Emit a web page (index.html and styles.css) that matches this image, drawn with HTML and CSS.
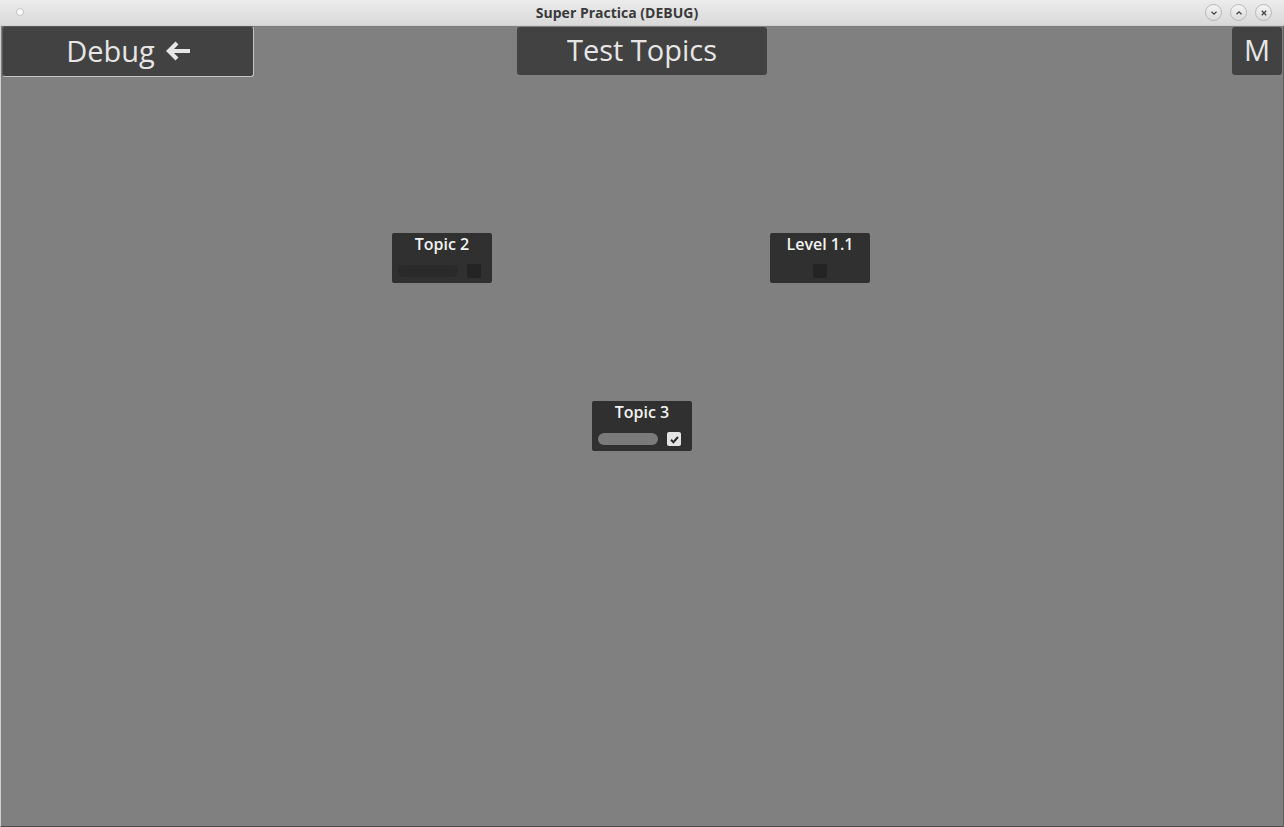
FILE: index.html
```html
<!DOCTYPE html>
<html>
<head>
<meta charset="utf-8">
<link rel="stylesheet" href="styles.css">
</head>
<body>
<div class="window">
  <div class="titlebar">
    <span class="dot"></span>
    <span class="title">Super Practica (DEBUG)</span>
    <div class="controls">
      <span class="ctl"><svg width="10" height="10" viewBox="0 0 10 10"><path d="M2.5 3.8 L5 6.2 L7.5 3.8" fill="none" stroke="#444" stroke-width="1.3"/></svg></span>
      <span class="ctl"><svg width="10" height="10" viewBox="0 0 10 10"><path d="M2.5 6.2 L5 3.8 L7.5 6.2" fill="none" stroke="#444" stroke-width="1.3"/></svg></span>
      <span class="ctl"><svg width="10" height="10" viewBox="0 0 10 10"><path d="M2.8 2.8 L7.2 7.2 M7.2 2.8 L2.8 7.2" fill="none" stroke="#444" stroke-width="1.3"/></svg></span>
    </div>
  </div>
  <div class="content">
    <div class="topbar">
      <div class="btn debug">Debug <svg class="arrow" width="28" height="22" viewBox="0 0 28 22"><path d="M13 3 L5 11 L13 19 M5 11 H26" fill="none" stroke="#e6e6e6" stroke-width="4.2" stroke-linejoin="miter"/></svg></div>
      <div class="btn heading">Test Topics</div>
      <div class="btn menu">M</div>
    </div>
    <div class="card c-topic2">
      <div class="card-title">Topic 2</div>
      <div class="card-row">
        <span class="bar"></span>
        <span class="check"></span>
      </div>
    </div>
    <div class="card c-level">
      <div class="card-title">Level 1.1</div>
      <div class="card-row center">
        <span class="check"></span>
      </div>
    </div>
    <div class="card c-topic3">
      <div class="card-title">Topic 3</div>
      <div class="card-row">
        <span class="bar light"></span>
        <span class="check on"><svg width="11" height="11" viewBox="0 0 11 11"><path d="M2 5.8 L4.4 8.2 L9 3" fill="none" stroke="#2a2a2a" stroke-width="2"/></svg></span>
      </div>
    </div>
  </div>
</div>
</body>
</html>
```
FILE: styles.css
```css
html, body {
  margin: 0;
  padding: 0;
  background: #808080;
}
.window {
  width: 1284px;
  height: 827px;
  display: flex;
  flex-direction: column;
  overflow: hidden;
  font-family: "Open Sans", "Noto Sans", sans-serif;
}
.titlebar {
  height: 26px;
  flex: none;
  background: linear-gradient(#ececec, #d9d9d9);
  display: flex;
  align-items: center;
  justify-content: center;
  position: relative;
  border-bottom: 1px solid #cfcfcf;
  box-sizing: border-box;
  padding-right: 50px;
}
.dot {
  position: absolute;
  left: 16px;
  top: 8px;
  width: 6px;
  height: 6px;
  border-radius: 50%;
  background: #fafafa;
  border: 1px solid #c4c4c4;
}
.title {
  font-family: "Open Sans", "Noto Sans", sans-serif;
  font-weight: 700;
  font-size: 14px;
  color: #3a3a3a;
  margin-top: -1px;
}
.controls {
  position: absolute;
  right: 12px;
  top: 4px;
  display: flex;
  gap: 8px;
}
.ctl {
  width: 17px;
  height: 17px;
  border-radius: 50%;
  box-sizing: border-box;
  border: 1px solid #b8b8b8;
  background: linear-gradient(#f4f4f4, #dcdcdc);
  display: flex;
  align-items: center;
  justify-content: center;
}
.content {
  flex: 1;
  position: relative;
  background: #808080;
  border-left: 1px solid #d0d0d0;
  border-right: 1px solid #606060;
  border-bottom: 1px solid #4a4a4a;
}
.topbar {
  display: grid;
  grid-template-columns: 1fr auto 1fr;
  align-items: start;
  padding: 0 1px 0 1px;
}
.btn {
  background: #424242;
  color: #e6e6e6;
  font-size: 29px;
  font-weight: 500;
  height: 48px;
  margin-top: 1px;
  border-radius: 3px;
  display: flex;
  align-items: center;
  justify-content: center;
  box-sizing: border-box;
  padding-bottom: 3px;
}
.debug {
  width: 252px;
  height: 51px;
  margin-top: 0;
  border: 1px solid #c6c6c6;
  border-top-color: #5a5a5a;
  border-left-color: #5a5a5a;
  gap: 9px;
  justify-self: start;
  padding-left: 2px;
}
.arrow {
  margin-top: 1px;
}
.heading {
  width: 250px;
}
.menu {
  width: 50px;
  justify-self: end;
}
.card {
  position: absolute;
  width: 100px;
  height: 50px;
  background: #303030;
  border-radius: 2px;
  box-sizing: border-box;
  padding: 0 6px;
  display: flex;
  flex-direction: column;
  align-items: stretch;
}
.c-topic2 { left: 391px; top: 207px; }
.c-level { left: 769px; top: 207px; }
.c-topic3 { left: 591px; top: 375px; }
.card-title {
  color: #f2f2f2;
  font-size: 16px;
  font-weight: 600;
  text-align: center;
  line-height: 22px;
}
.card-row {
  display: flex;
  align-items: center;
  justify-content: space-between;
  height: 16px;
  margin-top: 8px;
  padding-right: 5px;
}
.card-row.center {
  justify-content: center;
  padding-right: 0;
}
.bar {
  width: 60px;
  height: 12px;
  border-radius: 6px;
  background: #2a2a2a;
}
.bar.light {
  background: #7a7a7a;
}
.check {
  width: 14px;
  height: 14px;
  border-radius: 2px;
  background: #242424;
  display: flex;
  align-items: center;
  justify-content: center;
}
.check.on {
  background: #e4e4e4;
}
```
